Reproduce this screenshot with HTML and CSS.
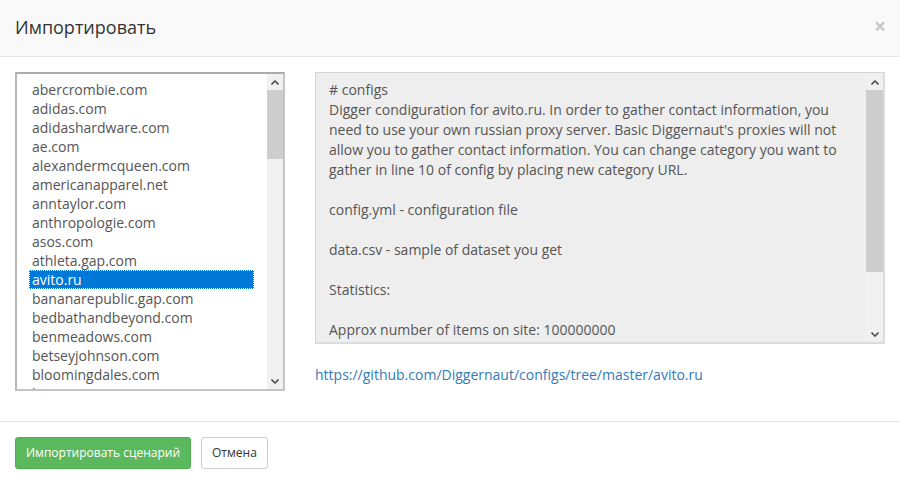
FILE: index.html
```html
<!DOCTYPE html>
<html>
<head>
<meta charset="utf-8">
<link rel="stylesheet" href="styles.css">
</head>
<body>
<div class="modal">
  <div class="modal-header">
    <h4 class="modal-title">Импортировать</h4>
    <span class="close">×</span>
  </div>
  <div class="modal-body">
    <div class="select-box">
      <ul class="options">
        <li>abercrombie.com</li>
        <li>adidas.com</li>
        <li>adidashardware.com</li>
        <li>ae.com</li>
        <li>alexandermcqueen.com</li>
        <li>americanapparel.net</li>
        <li>anntaylor.com</li>
        <li>anthropologie.com</li>
        <li>asos.com</li>
        <li>athleta.gap.com</li>
        <li class="selected">avito.ru</li>
        <li>bananarepublic.gap.com</li>
        <li>bedbathandbeyond.com</li>
        <li>benmeadows.com</li>
        <li>betseyjohnson.com</li>
        <li>bloomingdales.com</li>
        <li>boots.com</li>
      </ul>
      <div class="scrollbar sb-left">
        <div class="sb-btn"><svg width="8" height="5" viewBox="0 0 8 5"><path d="M0.5 4.5 L4 1 L7.5 4.5" fill="none" stroke="#505050" stroke-width="1.6"/></svg></div>
        <div class="sb-thumb thumb-left"></div>
        <div class="sb-fill"></div>
        <div class="sb-btn"><svg width="8" height="5" viewBox="0 0 8 5"><path d="M0.5 0.5 L4 4 L7.5 0.5" fill="none" stroke="#505050" stroke-width="1.6"/></svg></div>
      </div>
    </div>
    <div class="right">
      <div class="textarea">
        <div class="text">
          <div># configs</div>
          <div>Digger condiguration for avito.ru. In order to gather contact information, you</div>
          <div>need to use your own russian proxy server. Basic Diggernaut's proxies will not</div>
          <div>allow you to gather contact information. You can change category you want to</div>
          <div>gather in line 10 of config by placing new category URL.</div>
          <div>&nbsp;</div>
          <div>config.yml - configuration file</div>
          <div>&nbsp;</div>
          <div>data.csv - sample of dataset you get</div>
          <div>&nbsp;</div>
          <div>Statistics:</div>
          <div>&nbsp;</div>
          <div>Approx number of items on site: 100000000</div>
        </div>
        <div class="scrollbar sb-right">
          <div class="sb-btn"><svg width="8" height="5" viewBox="0 0 8 5"><path d="M0.5 4.5 L4 1 L7.5 4.5" fill="none" stroke="#505050" stroke-width="1.6"/></svg></div>
          <div class="sb-thumb thumb-right"></div>
          <div class="sb-fill"></div>
          <div class="sb-btn"><svg width="8" height="5" viewBox="0 0 8 5"><path d="M0.5 0.5 L4 4 L7.5 0.5" fill="none" stroke="#505050" stroke-width="1.6"/></svg></div>
        </div>
      </div>
      <a class="link" href="#">https://github.com/Diggernaut/configs/tree/master/avito.ru</a>
    </div>
  </div>
  <div class="modal-footer">
    <button class="btn btn-success">Импортировать сценарий</button>
    <button class="btn btn-default">Отмена</button>
  </div>
</div>
</body>
</html>
```
FILE: styles.css
```css
* { box-sizing: border-box; }
html, body { margin: 0; padding: 0; background: #fff; }
body {
  font-family: "Open Sans", "Liberation Sans", sans-serif;
  font-size: 14px;
  color: #333;
  width: 900px;
  height: 485px;
  overflow: hidden;
}
.modal { width: 900px; display: flex; flex-direction: column; }
.modal-header {
  height: 57px;
  background: #f9f9f9;
  border-bottom: 1px solid #e5e5e5;
  display: flex;
  align-items: center;
  justify-content: space-between;
  padding: 0 15px 2px 15px;
}
.modal-title {
  margin: 0;
  font-size: 18px;
  font-weight: 400;
  color: #333;
}
.close {
  font-size: 21px;
  font-weight: 700;
  color: #c8c8c8;
  line-height: 1;
  margin-top: -1px;
  margin-right: -1px;
}
.modal-body {
  display: flex;
  gap: 30px;
  padding: 15px 15px 30px 15px;
}
.select-box {
  width: 270px;
  height: 319px;
  border: 2px solid #c4c4c4;
  border-top-color: #ababab;
  border-left-color: #b8b8b8;
  display: flex;
  background: #fff;
  overflow: hidden;
}
.options {
  list-style: none;
  margin: 0;
  padding: 6px 13px 0 12px;
  flex: 1;
  overflow: hidden;
  color: #555;
}
.options li {
  height: 19px;
  line-height: 19px;
  padding-left: 3px;
  white-space: nowrap;
}
.options li.selected {
  background: #0078d7;
  color: #fff;
  outline: 1px dotted #fff;
  outline-offset: -1px;
}
.scrollbar {
  width: 16px;
  background: #f0f0f0;
  display: flex;
  flex-direction: column;
}
.sb-btn {
  height: 16px;
  display: flex;
  align-items: center;
  justify-content: center;
}
.sb-thumb { background: #cdcdcd; }
.thumb-left { height: 69px; }
.thumb-right { height: 182px; }
.sb-fill { flex: 1; }
.right { width: 570px; display: flex; flex-direction: column; }
.textarea {
  height: 272px;
  background: #eee;
  border: 1px solid #d4d4d4;
  border-right: 2px solid #dcdcdc;
  border-bottom: 2px solid #dcdcdc;
  display: flex;
}
.sb-right { width: 17px; margin-top: 1px; }
.text {
  flex: 1;
  padding: 7px 12px 0 13px;
  line-height: 20px;
  color: #555;
  white-space: nowrap;
  overflow: hidden;
}
.link {
  margin-top: 21px;
  color: #337ab7;
  text-decoration: none;
  line-height: 20px;
}
.modal-footer {
  border-top: 1px solid #e5e5e5;
  padding: 15px;
  display: flex;
  gap: 10px;
}
.btn {
  font-family: "Open Sans", "Liberation Sans", sans-serif;
  font-size: 12px;
  height: 32px;
  padding: 0 10px;
  border-radius: 3px;
  border: 1px solid transparent;
  line-height: 30px;
  white-space: nowrap;
}
.btn-success { background: #5cb85c; border-color: #4cae4c; color: #fff; }
.btn-default { background: #fff; border-color: #ccc; color: #333; }
```
